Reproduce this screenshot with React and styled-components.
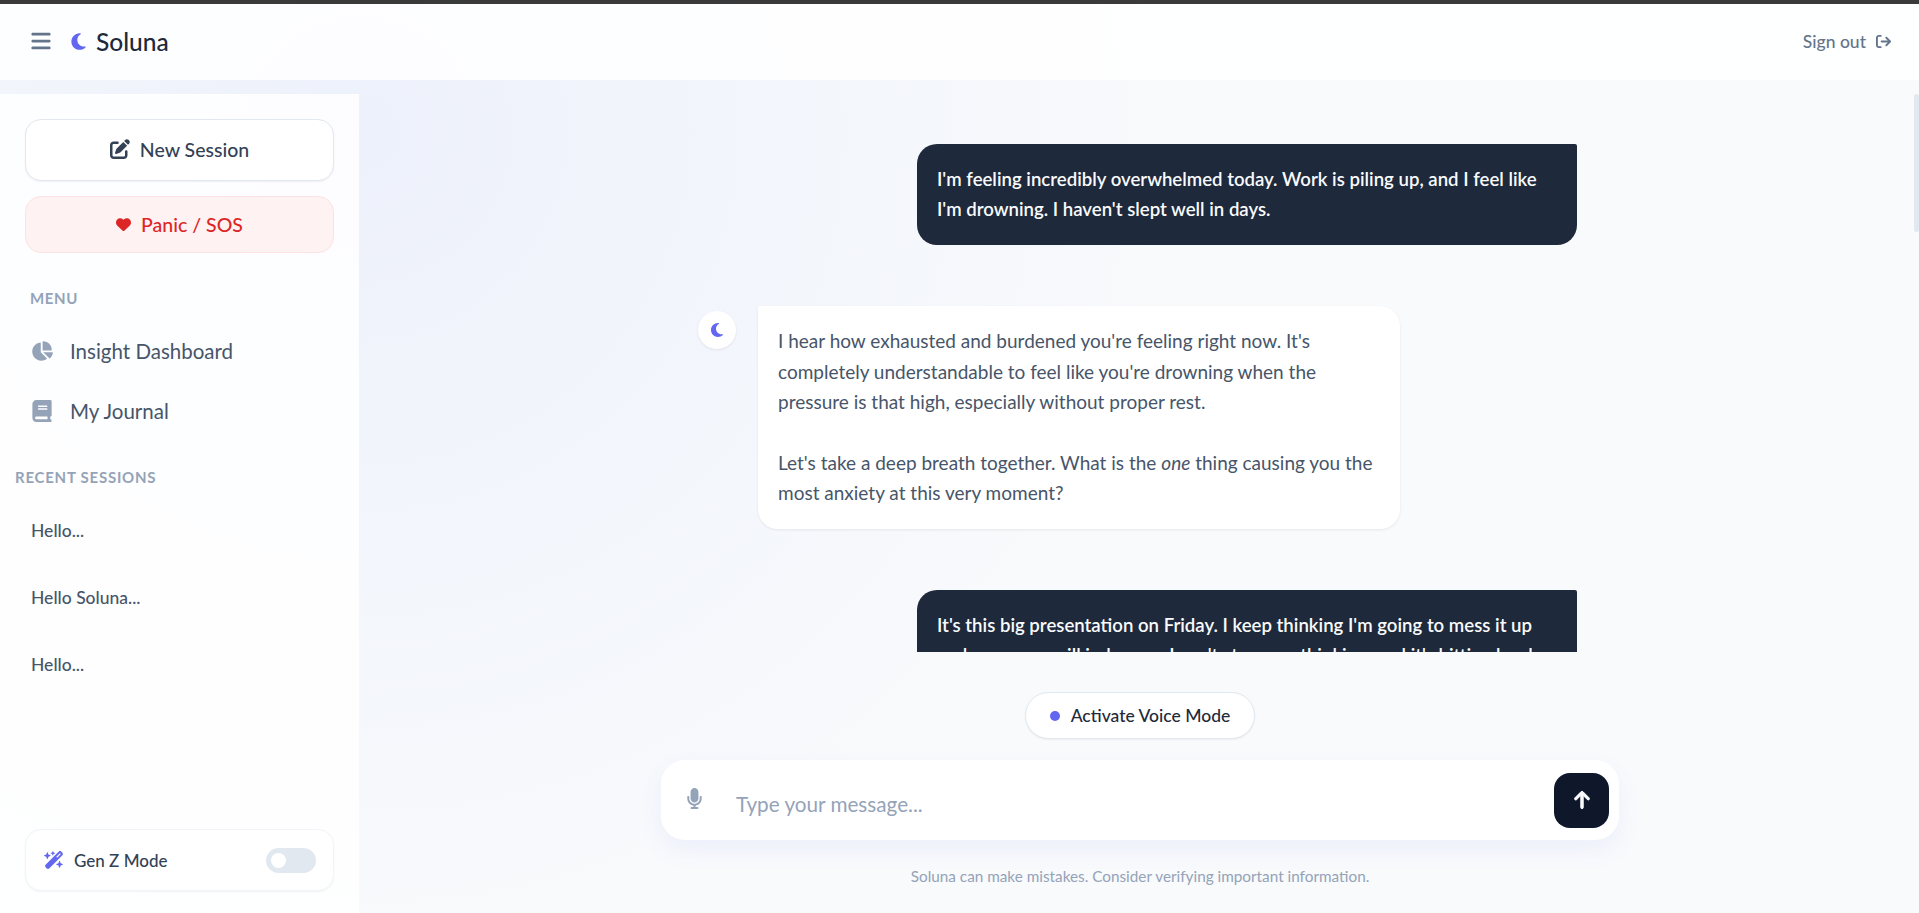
import React from "react";
import styled, { createGlobalStyle } from "styled-components";
import {
  FaArrowRightFromBracket,
  FaArrowUp,
  FaBars,
  FaBook,
  FaChartPie,
  FaHeart,
  FaMicrophone,
  FaMoon,
  FaPenToSquare,
  FaWandMagicSparkles,
} from "react-icons/fa6";

const FONT = `"Lato", "Noto Sans", sans-serif`;
const MEDIUM = `"Lato Medium", "Lato", "Noto Sans", sans-serif`;

const GlobalStyle = createGlobalStyle`
  html, body {
    margin: 0;
    height: 100%;
    overflow: hidden;
    font-family: ${FONT};
  }
  * { box-sizing: border-box; }
`;

const App = () => {
  return (
    <Page>
      <GlobalStyle />
      <Header>
        <Brand>
          <Burger><FaBars /></Burger>
          <BrandMoon><FaMoon /></BrandMoon>
          <BrandName>Soluna</BrandName>
        </Brand>
        <SignOut>
          Sign out
          <FaArrowRightFromBracket />
        </SignOut>
      </Header>
      <Body>
        <Sidebar>
          <NewSession><FaPenToSquare />New Session</NewSession>
          <Panic><FaHeart />Panic / SOS</Panic>
          <SectionLabel>MENU</SectionLabel>
          <NavItem><FaChartPie />Insight Dashboard</NavItem>
          <NavItem><FaBook />My Journal</NavItem>
          <RecentLabel>RECENT SESSIONS</RecentLabel>
          <SessionItem>Hello...</SessionItem>
          <SessionItem>Hello Soluna...</SessionItem>
          <SessionItem>Hello...</SessionItem>
          <GenZCard>
            <GenZLabel><FaWandMagicSparkles />Gen Z Mode</GenZLabel>
            <Toggle><Knob /></Toggle>
          </GenZCard>
        </Sidebar>
        <Main>
          <ScrollBar />
          <Messages>
            <UserBubble>
              I'm feeling incredibly overwhelmed today. Work is piling up, and I feel like
              I'm drowning. I haven't slept well in days.
            </UserBubble>
            <AiRow>
              <Avatar><FaMoon /></Avatar>
              <AiBubble>
                <p>
                  I hear how exhausted and burdened you're feeling right now. It's
                  completely understandable to feel like you're drowning when the
                  pressure is that high, especially without proper rest.
                </p>
                <p>
                  Let's take a deep breath together. What is the <em>one</em> thing causing you the
                  most anxiety at this very moment?
                </p>
              </AiBubble>
            </AiRow>
            <UserBubble>
              It's this big presentation on Friday. I keep thinking I'm going to mess it up
              and everyone will judge me. I can't stop overthinking, and it's hitting hard.
            </UserBubble>
          </Messages>
          <Composer>
            <VoicePill><VoiceDot />Activate Voice Mode</VoicePill>
            <InputBox>
              <MicButton><FaMicrophone /></MicButton>
              <Placeholder>Type your message...</Placeholder>
              <SendButton><FaArrowUp /></SendButton>
            </InputBox>
            <Disclaimer>Soluna can make mistakes. Consider verifying important information.</Disclaimer>
          </Composer>
        </Main>
      </Body>
    </Page>
  );
};

export default App;

const Page = styled.div`
  height: 913px;
  display: flex;
  flex-direction: column;
  border-top: 4px solid #3a3a3a;
  background: radial-gradient(circle 800px at 360px 130px, #edf1fb 0%, #f8fafc 100%);
  color: #1e293b;
`;

const Header = styled.header`
  height: 76px;
  flex-shrink: 0;
  display: flex;
  align-items: center;
  justify-content: space-between;
  padding: 0 28px 2px 30px;
  background: rgba(255, 255, 255, 0.85);
`;

const Brand = styled.div`
  display: flex;
  align-items: center;
`;

const Burger = styled.span`
  display: flex;
  color: #64748b;
  font-size: 22px;
  margin-right: 17px;
`;

const BrandMoon = styled.span`
  display: flex;
  color: #6366f1;
  font-size: 19px;
  margin-right: 8px;
`;

const BrandName = styled.span`
  font-family: ${MEDIUM};
  font-size: 24.5px;
  color: #1e293b;
`;

const SignOut = styled.div`
  display: flex;
  align-items: center;
  gap: 10px;
  font-family: ${MEDIUM};
  font-size: 17.5px;
  color: #64748b;
  svg { font-size: 15px; }
`;

const Body = styled.div`
  flex: 1;
  min-height: 0;
  display: flex;
  padding-top: 14px;
`;

const Sidebar = styled.aside`
  width: 359px;
  flex-shrink: 0;
  display: flex;
  flex-direction: column;
  padding: 25px 25px 22px;
  background: rgba(255, 255, 255, 0.85);
`;

const SideButton = styled.div`
  display: flex;
  align-items: center;
  justify-content: center;
  gap: 10px;
  border-radius: 16px;
  font-family: ${MEDIUM};
  font-size: 19.5px;
`;

const NewSession = styled(SideButton)`
  height: 62px;
  padding-bottom: 2px;
  background: #fff;
  border: 1px solid #e2e8f0;
  box-shadow: 0 1px 2px rgba(15, 23, 42, 0.06);
  color: #334155;
  svg { font-size: 20px; }
`;

const Panic = styled(SideButton)`
  height: 57px;
  margin-top: 15px;
  background: #fef2f2;
  border: 1px solid #fee2e2;
  color: #dc2626;
  svg { font-size: 15px; }
`;

const SectionLabel = styled.div`
  margin-top: 36px;
  padding-left: 5px;
  font-size: 15px;
  line-height: 18px;
  font-weight: 700;
  letter-spacing: 0.6px;
  color: #94a3b8;
`;

const NavItem = styled.div`
  display: flex;
  align-items: center;
  gap: 17px;
  height: 60px;
  padding-left: 6px;
  font-size: 20.5px;
  color: #475569;
  svg {
    font-size: 22px;
    color: #94a3b8;
  }
  ${SectionLabel} + & { margin-top: 14px; }
`;

const RecentLabel = styled(SectionLabel)`
  margin: 27px 0 11px -10px;
  padding-left: 0;
  letter-spacing: 0.75px;
`;

const SessionItem = styled.div`
  height: 67px;
  padding: 0 6px;
  display: flex;
  align-items: center;
  font-family: ${MEDIUM};
  font-size: 17.5px;
  color: #475569;
`;

const GenZCard = styled.div`
  margin-top: auto;
  height: 62px;
  display: flex;
  align-items: center;
  justify-content: space-between;
  padding: 0 17px 0 18px;
  background: #fff;
  border: 1px solid #f1f5f9;
  border-radius: 16px;
  box-shadow: 0 1px 2px rgba(15, 23, 42, 0.05);
`;

const GenZLabel = styled.div`
  display: flex;
  align-items: center;
  gap: 10px;
  font-family: ${MEDIUM};
  font-size: 17px;
  color: #334155;
  svg {
    font-size: 20px;
    color: #6366f1;
  }
`;

const Toggle = styled.div`
  width: 50px;
  height: 25px;
  border-radius: 13px;
  background: #e2e8f0;
  display: flex;
  align-items: center;
  padding-left: 5px;
`;

const Knob = styled.span`
  width: 15px;
  height: 15px;
  border-radius: 50%;
  background: #fff;
`;

const Main = styled.main`
  flex: 1;
  min-width: 0;
  position: relative;
  display: flex;
  flex-direction: column;
  align-items: center;
`;

const ScrollBar = styled.div`
  position: absolute;
  top: 0;
  right: 0;
  width: 5px;
  height: 138px;
  border-radius: 3px;
  background: #e2e8f0;
`;

const Messages = styled.div`
  width: 960px;
  height: 558px;
  flex-shrink: 0;
  overflow: hidden;
  display: flex;
  flex-direction: column;
  padding: 50px 42px 0 0;
`;

const UserBubble = styled.div`
  flex-shrink: 0;
  align-self: flex-end;
  width: 660px;
  padding: 20px 20px 21px;
  margin-bottom: 61px;
  border-radius: 20px 2px 20px 20px;
  background: #1e293b;
  color: #f8fafc;
  font-family: ${FONT};
  font-weight: 600;
  font-size: 18.6px;
  line-height: 30px;
`;

const AiRow = styled.div`
  flex-shrink: 0;
  display: flex;
  gap: 22px;
  padding-left: 39px;
  margin-bottom: 61px;
`;

const Avatar = styled.div`
  width: 38px;
  height: 38px;
  margin-top: 5px;
  flex-shrink: 0;
  display: flex;
  align-items: center;
  justify-content: center;
  border-radius: 50%;
  background: #fff;
  box-shadow: 0 1px 3px rgba(15, 23, 42, 0.08);
  color: #6366f1;
  font-size: 16px;
`;

const AiBubble = styled.div`
  width: 642px;
  padding: 20px;
  border-radius: 2px 20px 20px 20px;
  background: #fff;
  box-shadow: 0 1px 3px rgba(15, 23, 42, 0.08);
  color: #475569;
  font-size: 19px;
  line-height: 30.5px;
  p { margin: 0; }
  p + p { margin-top: 30px; }
`;

const Composer = styled.div`
  width: 958px;
  margin-left: 2px;
  display: flex;
  flex-direction: column;
  align-items: center;
  padding-top: 40px;
`;

const VoicePill = styled.div`
  height: 47px;
  width: 230px;
  display: flex;
  align-items: center;
  justify-content: center;
  gap: 11px;
  border-radius: 24px;
  background: #fff;
  border: 1px solid #e2e8f0;
  box-shadow: 0 1px 2px rgba(15, 23, 42, 0.06);
  font-family: ${MEDIUM};
  font-size: 17.5px;
  color: #1e293b;
`;

const VoiceDot = styled.span`
  width: 10px;
  height: 10px;
  border-radius: 50%;
  background: #6366f1;
`;

const InputBox = styled.div`
  width: 100%;
  height: 80px;
  margin-top: 21px;
  display: flex;
  align-items: center;
  padding: 0 10px 0 23px;
  border-radius: 24px;
  background: #fff;
  box-shadow: 0 10px 25px rgba(99, 102, 241, 0.07);
`;

const MicButton = styled.span`
  display: flex;
  color: #94a3b8;
  font-size: 21px;
  margin: -4px 31px 0 0;
`;

const Placeholder = styled.span`
  flex: 1;
  padding-top: 7px;
  font-size: 20.7px;
  color: #94a3b8;
`;

const SendButton = styled.div`
  width: 55px;
  height: 55px;
  display: flex;
  align-items: center;
  justify-content: center;
  border-radius: 16px;
  background: #0f172a;
  color: #f8fafc;
  font-size: 20px;
  svg {
    stroke: currentColor;
    stroke-width: 24;
  }
`;

const Disclaimer = styled.div`
  margin-top: 27px;
  font-size: 15.3px;
  line-height: 18px;
  color: #94a3b8;
`;
